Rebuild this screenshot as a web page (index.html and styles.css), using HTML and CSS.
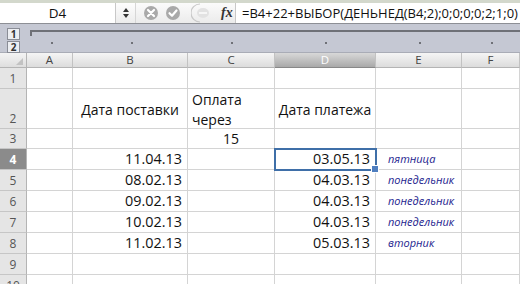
FILE: index.html
```html
<!DOCTYPE html>
<html lang="ru">
<head>
    <meta charset="UTF-8">
    <title>Excel — ВЫБОР</title>
    <link rel="stylesheet" href="styles.css">
</head>
<body>
    <div class="top-strip"></div>
    <div class="formula-bar">
        <div class="name-box">D4</div>
        <div class="stepper">
            <svg width="8" height="12" viewBox="0 0 8 12"><path d="M4 1 L7 5 L1 5 Z M4 11 L7 7 L1 7 Z" fill="#333"/></svg>
        </div>
        <div class="fx-buttons">
            <svg width="16" height="16" viewBox="0 0 16 16"><circle cx="8" cy="8" r="7" fill="#a9a9a9"/><path d="M5 5 L11 11 M11 5 L5 11" stroke="#fff" stroke-width="2.2" stroke-linecap="round"/></svg>
            <svg width="16" height="16" viewBox="0 0 16 16"><circle cx="8" cy="8" r="7" fill="#a9a9a9"/><path d="M4.5 8.2 L7 10.7 L11.5 5.5" stroke="#fff" stroke-width="2.2" fill="none" stroke-linecap="round" stroke-linejoin="round"/></svg>
            <svg class="minus" width="22" height="20" viewBox="0 0 22 20"><path d="M9 1 A9 9 0 0 0 9 19" stroke="#c9c9c9" stroke-width="1.2" fill="none"/><ellipse cx="12" cy="10" rx="6" ry="5" fill="#e2e2e2"/><rect x="8" y="9" width="8" height="2" fill="#f6f6f6"/></svg>
            <span class="fx">fx</span>
        </div>
        <div class="formula">=B4+22+ВЫБОР(ДЕНЬНЕД(B4;2);0;0;0;0;2;1;0)</div>
    </div>
    <div class="outline">
        <div class="levels">
            <span class="level">1</span>
            <span class="level">2</span>
        </div>
        <div class="group-bar">
            <div class="group-line"></div>
            <div class="dots">
                <i style="left: 24px"></i>
                <i style="left: 104px"></i>
                <i style="left: 204px"></i>
                <i style="left: 298px"></i>
                <i style="left: 392px"></i>
                <i style="left: 464px"></i>
            </div>
        </div>
    </div>
    <div class="sheet">
        <div class="corner"><span></span></div>
        <div class="col-head">A</div>
        <div class="col-head">B</div>
        <div class="col-head">C</div>
        <div class="col-head active">D</div>
        <div class="col-head">E</div>
        <div class="col-head">F</div>

        <div class="row-head">1</div>
        <div class="cell"></div><div class="cell"></div><div class="cell"></div><div class="cell"></div><div class="cell"></div><div class="cell"></div>

        <div class="row-head">2</div>
        <div class="cell"></div>
        <div class="cell center mid">Дата поставки</div>
        <div class="cell wrap">Оплата<br>через</div>
        <div class="cell center mid">Дата платежа</div>
        <div class="cell"></div><div class="cell"></div>

        <div class="row-head">3</div>
        <div class="cell"></div><div class="cell"></div>
        <div class="cell center">15</div>
        <div class="cell"></div><div class="cell"></div><div class="cell"></div>

        <div class="row-head active">4</div>
        <div class="cell"></div>
        <div class="cell num">11.04.13</div>
        <div class="cell"></div>
        <div class="cell num selected">03.05.13<span class="handle"></span></div>
        <div class="cell day">пятница</div>
        <div class="cell"></div>

        <div class="row-head">5</div>
        <div class="cell"></div>
        <div class="cell num">08.02.13</div>
        <div class="cell"></div>
        <div class="cell num">04.03.13</div>
        <div class="cell day">понедельник</div>
        <div class="cell"></div>

        <div class="row-head">6</div>
        <div class="cell"></div>
        <div class="cell num">09.02.13</div>
        <div class="cell"></div>
        <div class="cell num">04.03.13</div>
        <div class="cell day">понедельник</div>
        <div class="cell"></div>

        <div class="row-head">7</div>
        <div class="cell"></div>
        <div class="cell num">10.02.13</div>
        <div class="cell"></div>
        <div class="cell num">04.03.13</div>
        <div class="cell day">понедельник</div>
        <div class="cell"></div>

        <div class="row-head">8</div>
        <div class="cell"></div>
        <div class="cell num">11.02.13</div>
        <div class="cell"></div>
        <div class="cell num">05.03.13</div>
        <div class="cell day">вторник</div>
        <div class="cell"></div>

        <div class="row-head">9</div>
        <div class="cell"></div><div class="cell"></div><div class="cell"></div><div class="cell"></div><div class="cell"></div><div class="cell"></div>

        <div class="row-head">10</div>
        <div class="cell"></div><div class="cell"></div><div class="cell"></div><div class="cell"></div><div class="cell"></div><div class="cell"></div>
    </div>
</body>
</html>
```

FILE: styles.css
```css
body {
    margin: 0;
    width: 520px;
    height: 284px;
    overflow: hidden;
    font-family: "Open Sans", "Noto Sans", sans-serif;
    background: #fff;
}
.top-strip {
    height: 3px;
    background: #d3d8cc;
}
.formula-bar {
    display: flex;
    height: 20px;
    background: #fff;
    border-bottom: 1px solid #8d8f95;
}
.name-box {
    width: 115px;
    border-right: 1px solid #c8c8c8;
    text-align: center;
    font-size: 13.5px;
    line-height: 20px;
    color: #111;
}
.stepper {
    width: 19px;
    display: flex;
    align-items: center;
    justify-content: center;
    border-right: 1px solid #d6d6d6;
    background: linear-gradient(#fdfdfd, #ececec);
}
.fx-buttons {
    width: 100px;
    display: flex;
    align-items: center;
    gap: 6px;
    padding-left: 7px;
    box-sizing: border-box;
    border-right: 1px solid #c8c8c8;
    background: linear-gradient(#fbfbfb, #ebebeb);
}
.fx-buttons .minus {
    margin-left: 4px;
}
.fx {
    font-family: "Liberation Serif", serif;
    font-style: italic;
    font-weight: bold;
    font-size: 14px;
    color: #333;
    margin-left: 2px;
}
.formula {
    flex: 1;
    padding-left: 6px;
    font-size: 13px;
    line-height: 20px;
    color: #111;
    white-space: nowrap;
    overflow: hidden;
}
.outline {
    display: flex;
    height: 28px;
    background: #c5c8d3;
    border-bottom: 1px solid #a9acb6;
}
.levels {
    width: 27px;
    display: flex;
    flex-direction: column;
    align-items: center;
    padding-top: 4px;
    box-sizing: border-box;
}
.level {
    width: 11px;
    height: 10px;
    margin-bottom: 1px;
    background: #eceef2;
    border: 1px solid #8a8d96;
    font-size: 10px;
    line-height: 10px;
    font-weight: bold;
    text-align: center;
    color: #333;
}
.group-bar {
    flex: 1;
    position: relative;
}
.group-line {
    margin-top: 6px;
    margin-left: 3px;
    height: 4px;
    border-top: 2px solid #6f7177;
    border-left: 2px solid #6f7177;
}
.dots i {
    position: absolute;
    top: 18px;
    width: 2px;
    height: 2px;
    background: #6f7177;
}
.sheet {
    display: grid;
    grid-template-columns: 27px 46px 115px 87px 101px 86px 1fr;
    grid-template-rows: 15px 21px 40px 20px repeat(7, 21px);
}
.sheet > div {
    box-sizing: border-box;
    border-right: 1px solid #d4d4d4;
    border-bottom: 1px solid #d4d4d4;
}
.corner {
    background: linear-gradient(#f4f4f4, #dedede);
    position: relative;
    border-right-color: #b4b4b4 !important;
    border-bottom-color: #b4b4b4 !important;
}
.corner span {
    position: absolute;
    right: 3px;
    bottom: 2px;
    width: 0;
    height: 0;
    border-left: 7px solid transparent;
    border-bottom: 7px solid #c2c2c2;
}
.col-head {
    background: linear-gradient(#f5f5f5, #dcdcdc);
    border-bottom-color: #b4b4b4 !important;
    border-right-color: #c2c2c2 !important;
    text-align: center;
    font-size: 11.5px;
    line-height: 14px;
    color: #444;
}
.col-head.active {
    background: linear-gradient(#d8d8d8, #a9a9a9);
    color: #fff;
    border-bottom-color: #888 !important;
}
.row-head {
    background: #e5e5e5;
    border-right-color: #b4b4b4 !important;
    border-bottom-color: #c6c6c6 !important;
    text-align: center;
    font-size: 12px;
    color: #555;
    display: flex;
    align-items: flex-end;
    justify-content: center;
    padding-bottom: 1px;
}
.row-head.active {
    background: #8b8b8b;
    color: #fff;
    font-weight: bold;
}
.cell {
    font-size: 14px;
    color: #111;
    display: flex;
    align-items: flex-end;
    padding: 0 4px 0 4px;
    white-space: nowrap;
    position: relative;
}
.center {
    justify-content: center;
}
.mid {
    align-items: center;
    padding-top: 2px;
}
.wrap {
    align-items: flex-start;
    line-height: 20px;
    padding-top: 1px;
}
.num {
    justify-content: flex-end;
    padding-right: 5px;
    font-size: 14.4px;
    line-height: 20px;
}
.day {
    font-size: 11px;
    font-style: italic;
    color: #1c1c8e;
    padding-left: 12px;
    padding-bottom: 3px;
}
.selected {
    outline: 2px solid #3f6fa8;
    outline-offset: -1px;
    z-index: 1;
}
.handle {
    position: absolute;
    right: -4px;
    bottom: -4px;
    width: 6px;
    height: 6px;
    background: #4f7fc0;
    border: 1px solid #fff;
}
```
